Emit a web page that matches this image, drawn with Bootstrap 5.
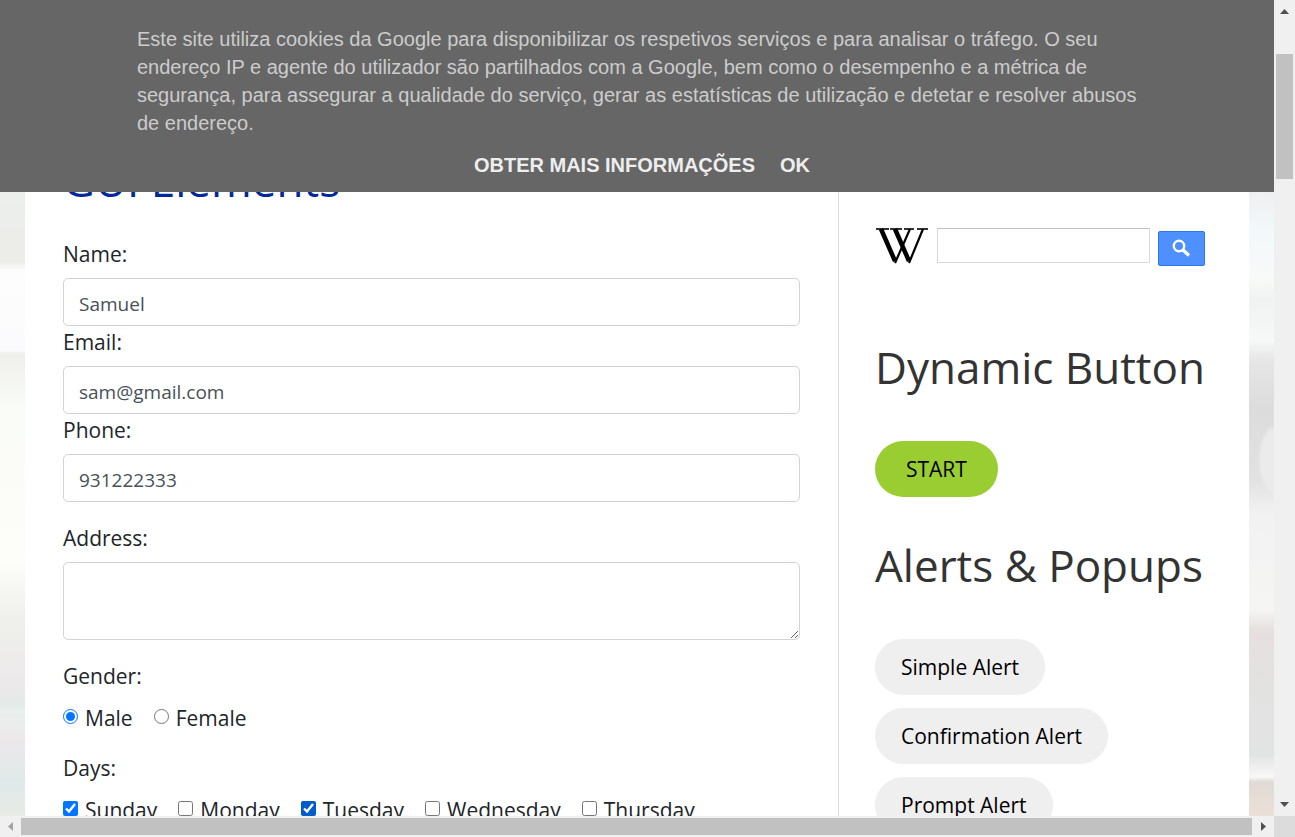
<!DOCTYPE html>
<html lang="pt">
<head>
<meta charset="utf-8">
<meta name="viewport" content="width=device-width, initial-scale=1">
<title>GUI Elements</title>
<link href="https://cdn.jsdelivr.net/npm/bootstrap@5.3.0/dist/css/bootstrap.min.css" rel="stylesheet">
<style>
  body { font: 21px/32px "Open Sans", "Noto Sans", sans-serif; color: #212529; }
  .browser-pane { background:
      linear-gradient(#ecefec 190px, #ecece8 262px, #fdfdfd 270px, #fbfbfd 350px, #eff0eb 355px, #fafcf8 410px, #fdfdf9 560px, #eff0ec 620px, #ebe8ea 690px, #e3eae8 706px, #e8f0ed 709px, #ece8ea 740px, #e0e9e9 780px, #e7ebe5 816px) 0 0 / 25px 100% no-repeat,
      radial-gradient(16px 36px at 100% 460px, #ebebeb 80%, transparent) 100% 0 / 25px 100% no-repeat,
      linear-gradient(#eeeff1 190px, #f3f8fa 230px, #f8faf8 280px, #f0f2f2 300px, #f7f8f8 340px, #e6e6e6 360px, #dcdcdc 410px, #e2e2e2 480px, #f1f2f1 515px, #f5f5f4 610px, #e6e0df 630px, #e2e2e1 690px, #e2e4e3 755px, #f7f8f7 777px, #e0dad5 782px, #ece0d8 816px) 100% 0 / 25px 100% no-repeat; }
  .page-sheet { margin: 0 25px; }
  .main-col { padding: 160px 38px 0; min-width: 0; }
  .side-col { flex: 0 0 411px; min-width: 0; border-left: 1px solid #ddd; padding: 227px 44px 0 36px; }
  h2 { font-size: 44px; line-height: 56px; font-weight: 400; color: #333; margin: 0; }
  .main-col h2 { color: #00279c; margin: -8px 0 30px; }
  .cookie-bar { background: #666; color: #ccc; height: 192px; padding-top: 25px; font: 20px/28px "Liberation Sans", Arial, sans-serif; z-index: 2; }
  .cookie-inner { max-width: 1004px; padding: 0 2px; margin: 0 auto; }
  .cookie-inner p { margin-bottom: 14px; }
  .cookie-links { gap: 25px; padding-left: 10px; }
  .cookie-links a { color: #eee; font-weight: 700; text-decoration: none; }
  .field-label { margin-bottom: 8px; display: block; }
  .form-control { font-size: 19px; line-height: 28px; height: 48px; padding: 12px 15px 8px; border-color: #ced4da; border-radius: 5px; color: #495057; }
  textarea.form-control { height: 78px; }
  .group-gap { margin-bottom: 20px; }
  .options { gap: 21px; }
  .options label { display: flex; align-items: center; gap: 7px; padding-top: 4px; height: 32px; }
  .options input { width: 15px; height: 15px; margin: 0 0 4px; accent-color: #0075ff; }
  .options .active-tick { accent-color: #005cc8; }
  .wiki-row { gap: 8px; height: 40px; }
  .wiki-mark { width: 54px; line-height: 0; padding: 1px; }
  .wiki-text { flex: 1; width: 0; min-width: 0; height: 35px; margin-top: 1px; border: 1px solid #d9d9d9; border-top-color: #c0c0c0; }
  .wiki-go { width: 47px; height: 35px; margin-top: 4px; background: #4d90fe; border: 1px solid #2f75eb; border-radius: 2px; }
  .pill { border: 0; background: #efefef; color: #000; height: 56px; padding: 0 26px; }
  .pill-start { background: #9acd32; padding: 0 31px; }
  .side-col h2 + * { margin-top: 46px; }
  .alerts-title { padding-top: 40px; }
  .pills { gap: 13px; }
  .vbar { width: 21px; background: #f0f0f0; padding: 9px 2px; }
  .hbar { height: 21px; background: #f0f0f0; }
  .thumb { background: #c1c1c1; }
  .vbar .thumb { height: 125px; width: 17px; margin-top: 40px; }
  .hbar .thumb { height: 17px; }
  .corner { width: 21px; background: #dcdcdc; }
  .hend { width: 22px; }
</style>
</head>
<body class="vh-100 overflow-hidden d-flex flex-column">
<div class="d-flex flex-grow-1 overflow-hidden">
  <div class="browser-pane flex-grow-1 position-relative overflow-hidden">
    <aside class="cookie-bar position-absolute top-0 start-0 w-100">
      <div class="cookie-inner">
        <p>Este site utiliza cookies da Google para disponibilizar os respetivos serviços e para analisar o tráfego. O seu endereço IP e agente do utilizador são partilhados com a Google, bem como o desempenho e a métrica de segurança, para assegurar a qualidade do serviço, gerar as estatísticas de utilização e detetar e resolver abusos de endereço.</p>
        <div class="cookie-links d-flex justify-content-center"><a href="#">OBTER MAIS INFORMAÇÕES</a><a href="#">OK</a></div>
      </div>
    </aside>
    <div class="page-sheet bg-white d-flex">
      <main class="main-col flex-grow-1">
        <h2>GUI Elements</h2>
        <form>
          <div class="group-gap">
            <label class="field-label" for="name">Name:</label>
            <input class="form-control" id="name" type="text" value="Samuel">
            <label class="field-label" for="email">Email:</label>
            <input class="form-control" id="email" type="text" value="sam@gmail.com">
            <label class="field-label" for="phone">Phone:</label>
            <input class="form-control" id="phone" type="text" value="931222333">
          </div>
          <div class="group-gap">
            <label class="field-label" for="address">Address:</label>
            <textarea class="form-control" id="address"></textarea>
          </div>
          <div class="group-gap" role="group" aria-labelledby="gender">
            <span class="field-label" id="gender">Gender:</span>
            <div class="options d-flex">
              <label><input type="radio" name="gender" checked>Male</label>
              <label><input type="radio" name="gender">Female</label>
            </div>
          </div>
          <div class="group-gap" role="group" aria-labelledby="days">
            <span class="field-label" id="days">Days:</span>
            <div class="options d-flex">
              <label><input type="checkbox" checked>Sunday</label>
              <label><input type="checkbox">Monday</label>
              <label><input class="active-tick" type="checkbox" checked>Tuesday</label>
              <label><input type="checkbox">Wednesday</label>
              <label><input type="checkbox">Thursday</label>
            </div>
          </div>
        </form>
      </main>
      <section class="side-col">
        <form class="wiki-row d-flex align-items-start">
          <a class="wiki-mark" href="#" aria-label="Wikipedia">
            <svg width="52" height="36" viewBox="0 0 52 36" fill="none" stroke="#000"><g stroke-width="1.600"><line x1="0" y1="1" x2="13" y2="1"/><line x1="14" y1="1" x2="26" y2="1"/><line x1="28" y1="1" x2="38" y2="1"/><line x1="41" y1="1" x2="52" y2="1"/></g><g stroke-width="4.500"><line x1="5" y1="1" x2="19" y2="33"/><line x1="19" y1="1" x2="33" y2="33"/></g><g stroke-width="2.200"><line x1="19" y1="35" x2="34" y2="1"/><line x1="33" y1="35" x2="47" y2="1"/></g></svg>
          </a>
          <input class="wiki-text" type="text" aria-label="Search Wikipedia">
          <button class="wiki-go d-flex align-items-center justify-content-center p-0" type="button" aria-label="Search">
            <svg width="19" height="19" viewBox="0 0 19 19" fill="none" stroke="#fff"><circle cx="7" cy="7" r="5.2" stroke-width="2.4"/><path d="M11 11l6 5.500" stroke-width="3.4"/></svg>
          </button>
        </form>
        <h2 class="text-nowrap mt-5 pt-4">Dynamic Button</h2>
        <button class="pill pill-start rounded-pill d-block" type="button">START</button>
        <h2 class="alerts-title text-nowrap">Alerts &amp; Popups</h2>
        <div class="pills d-flex flex-column align-items-start">
          <button class="pill rounded-pill" type="button">Simple Alert</button>
          <button class="pill rounded-pill" type="button">Confirmation Alert</button>
          <button class="pill rounded-pill" type="button">Prompt Alert</button>
        </div>
      </section>
    </div>
  </div>
  <div class="vbar d-flex flex-column align-items-center flex-shrink-0">
    <svg width="9" height="5"><path d="M0 5L4.500 0 9 5z" fill="#505050"/></svg>
    <div class="thumb"></div>
    <svg class="mt-auto" width="9" height="5"><path d="M0 0L4.500 5 9 0z" fill="#505050"/></svg>
  </div>
</div>
<div class="hbar d-flex align-items-center flex-shrink-0">
  <div class="corner bg-transparent d-flex justify-content-center"><svg width="5" height="9"><path d="M5 0L0 4.500 5 9z" fill="#a3a3a3"/></svg></div>
  <div class="thumb flex-grow-1"></div>
  <div class="hend d-flex justify-content-center"><svg width="5" height="9"><path d="M0 0L5 4.500 0 9z" fill="#505050"/></svg></div>
  <div class="corner align-self-stretch"></div>
</div>
<script src="https://cdn.jsdelivr.net/npm/bootstrap@5.3.0/dist/js/bootstrap.bundle.min.js"></script>
</body>
</html>
